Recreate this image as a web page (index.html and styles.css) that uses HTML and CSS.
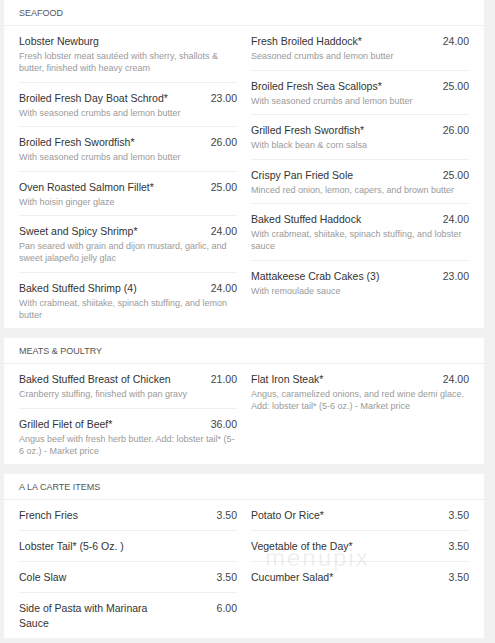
FILE: index.html
```html
<!DOCTYPE html>
<html>
<head>
<meta charset="utf-8">
<link rel="stylesheet" href="styles.css">
</head>
<body>
<div class="page">
  <section class="card">
    <div class="card-head">SEAFOOD</div>
    <div class="cols">
      <div class="col">
        <div class="item">
          <div class="item-top"><span class="name">Lobster Newburg</span><span class="price"></span></div>
          <div class="desc">Fresh lobster meat sautéed with sherry, shallots &amp; butter, finished with heavy cream</div>
        </div>
        <div class="item">
          <div class="item-top"><span class="name">Broiled Fresh Day Boat Schrod*</span><span class="price">23.00</span></div>
          <div class="desc">With seasoned crumbs and lemon butter</div>
        </div>
        <div class="item">
          <div class="item-top"><span class="name">Broiled Fresh Swordfish*</span><span class="price">26.00</span></div>
          <div class="desc">With seasoned crumbs and lemon butter</div>
        </div>
        <div class="item">
          <div class="item-top"><span class="name">Oven Roasted Salmon Fillet*</span><span class="price">25.00</span></div>
          <div class="desc">With hoisin ginger glaze</div>
        </div>
        <div class="item">
          <div class="item-top"><span class="name">Sweet and Spicy Shrimp*</span><span class="price">24.00</span></div>
          <div class="desc">Pan seared with grain and dijon mustard, garlic, and sweet jalapeño jelly glac</div>
        </div>
        <div class="item">
          <div class="item-top"><span class="name">Baked Stuffed Shrimp (4)</span><span class="price">24.00</span></div>
          <div class="desc">With crabmeat, shiitake, spinach stuffing, and lemon butter</div>
        </div>
      </div>
      <div class="col">
        <div class="item">
          <div class="item-top"><span class="name">Fresh Broiled Haddock*</span><span class="price">24.00</span></div>
          <div class="desc">Seasoned crumbs and lemon butter</div>
        </div>
        <div class="item">
          <div class="item-top"><span class="name">Broiled Fresh Sea Scallops*</span><span class="price">25.00</span></div>
          <div class="desc">With seasoned crumbs and lemon butter</div>
        </div>
        <div class="item">
          <div class="item-top"><span class="name">Grilled Fresh Swordfish*</span><span class="price">26.00</span></div>
          <div class="desc">With black bean &amp; corn salsa</div>
        </div>
        <div class="item">
          <div class="item-top"><span class="name">Crispy Pan Fried Sole</span><span class="price">25.00</span></div>
          <div class="desc">Minced red onion, lemon, capers, and brown butter</div>
        </div>
        <div class="item">
          <div class="item-top"><span class="name">Baked Stuffed Haddock</span><span class="price">24.00</span></div>
          <div class="desc">With crabmeat, shiitake, spinach stuffing, and lobster sauce</div>
        </div>
        <div class="item">
          <div class="item-top"><span class="name">Mattakeese Crab Cakes (3)</span><span class="price">23.00</span></div>
          <div class="desc">With remoulade sauce</div>
        </div>
      </div>
    </div>
  </section>

  <section class="card">
    <div class="card-head">MEATS &amp; POULTRY</div>
    <div class="cols">
      <div class="col">
        <div class="item">
          <div class="item-top"><span class="name">Baked Stuffed Breast of Chicken</span><span class="price">21.00</span></div>
          <div class="desc">Cranberry stuffing, finished with pan gravy</div>
        </div>
        <div class="item">
          <div class="item-top"><span class="name">Grilled Filet of Beef*</span><span class="price">36.00</span></div>
          <div class="desc">Angus beef with fresh herb butter. Add: lobster tail* (5-6 oz.) - Market price</div>
        </div>
      </div>
      <div class="col">
        <div class="item">
          <div class="item-top"><span class="name">Flat Iron Steak*</span><span class="price">24.00</span></div>
          <div class="desc">Angus, caramelized onions, and red wine demi glace. Add: lobster tail* (5-6 oz.) - Market price</div>
        </div>
      </div>
    </div>
  </section>

  <section class="card">
    <div class="card-head">A LA CARTE ITEMS</div>
    <div class="cols">
      <div class="col">
        <div class="item">
          <div class="item-top"><span class="name">French Fries</span><span class="price">3.50</span></div>
        </div>
        <div class="item">
          <div class="item-top"><span class="name">Lobster Tail* (5-6 Oz. )</span><span class="price"></span></div>
        </div>
        <div class="item">
          <div class="item-top"><span class="name">Cole Slaw</span><span class="price">3.50</span></div>
        </div>
        <div class="item">
          <div class="item-top"><span class="name">Side of Pasta with Marinara Sauce</span><span class="price">6.00</span></div>
        </div>
      </div>
      <div class="col">
        <div class="item">
          <div class="item-top"><span class="name">Potato Or Rice*</span><span class="price">3.50</span></div>
        </div>
        <div class="item">
          <div class="item-top"><span class="name">Vegetable of the Day*</span><span class="price">3.50</span></div>
        </div>
        <div class="item">
          <div class="item-top"><span class="name">Cucumber Salad*</span><span class="price">3.50</span></div>
        </div>
      </div>
    </div>
    <div class="watermark">menupix</div>
  </section>
</div>
</body>
</html>
```

FILE: styles.css
```css
html, body {
  margin: 0;
  padding: 0;
}

body {
  background: #f1f1f1;
  font-family: "Liberation Sans", Arial, sans-serif;
  color: #333;
}

.page {
  padding: 0 11px 0 4px;
  display: flex;
  flex-direction: column;
  gap: 10px;
}

.card {
  background: #fff;
  position: relative;
}

.card-head {
  height: 25px;
  line-height: 26px;
  padding: 0 15px;
  font-size: 9px;
  color: #555;
  border-bottom: 1px solid #efefef;
}

.cols {
  display: grid;
  grid-template-columns: 1fr 1fr;
  column-gap: 14px;
  padding: 0 15px;
}

.item {
  padding: 8px 0 7px;
  border-bottom: 1px solid #efefef;
}

.col .item:last-child {
  border-bottom: none;
}

.item-top {
  display: flex;
  justify-content: space-between;
  align-items: flex-start;
  font-size: 10.5px;
  line-height: 15px;
  color: #333;
}

.name {
  max-width: 72%;
}

.price {
  flex: none;
  color: #444;
}

.desc {
  margin-top: 1px;
  margin-bottom: 0.5px;
  font-size: 9px;
  line-height: 12px;
  color: #9a9a9a;
}

.watermark {
  position: absolute;
  left: 261px;
  top: 72px;
  font-size: 24px;
  line-height: 24px;
  letter-spacing: 2px;
  color: rgba(0, 0, 0, 0.08);
  pointer-events: none;
}
```
